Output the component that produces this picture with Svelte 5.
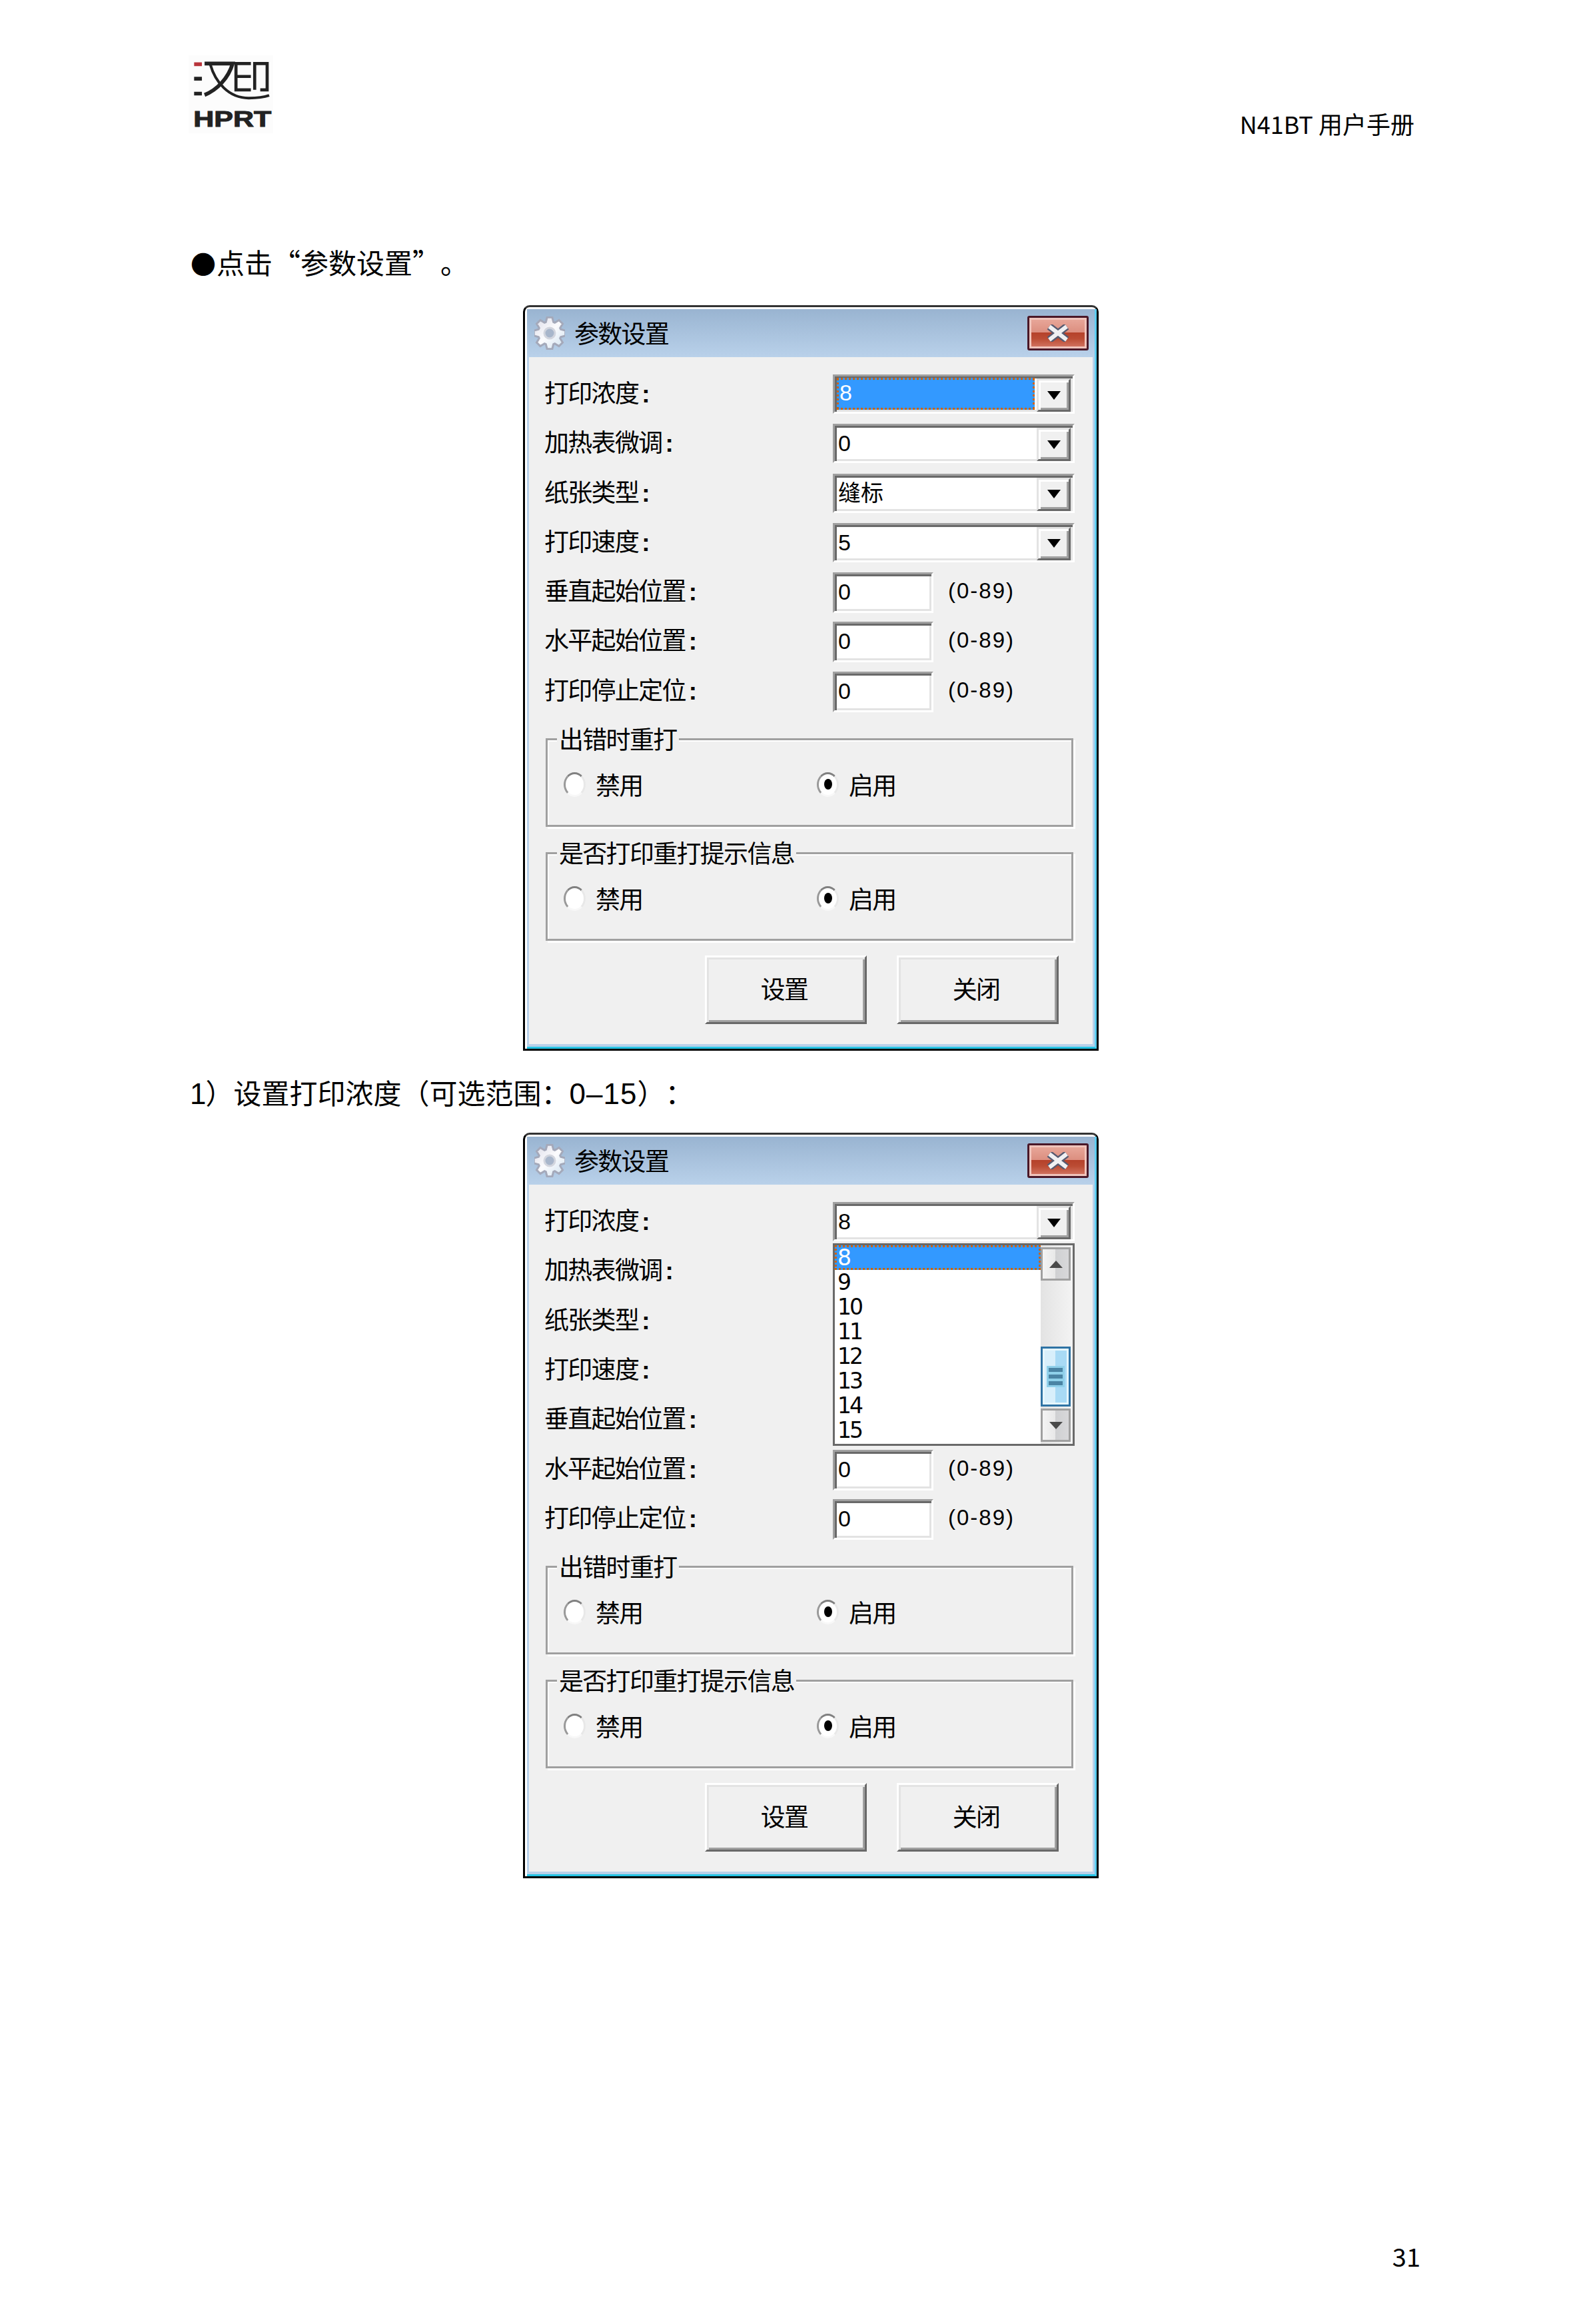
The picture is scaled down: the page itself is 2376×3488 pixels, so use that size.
<script lang="ts">
	// 用户手册第 31 页：参数设置对话框（两张截图，第二张展开了打印浓度下拉列表）
	const rows = [
		{ label: '打印浓度', value: '8', kind: 'combo' },
		{ label: '加热表微调', value: '0', kind: 'combo' },
		{ label: '纸张类型', value: '缝标', kind: 'combo' },
		{ label: '打印速度', value: '5', kind: 'combo' },
		{ label: '垂直起始位置', value: '0', kind: 'input' },
		{ label: '水平起始位置', value: '0', kind: 'input' },
		{ label: '打印停止定位', value: '0', kind: 'input' }
	];
	const groups = ['出错时重打', '是否打印重打提示信息'];
	const densities = ['8', '9', '10', '11', '12', '13', '14', '15'];

	// 齿轮图标的轮廓：8 个齿
	function gearPath(cx: number, cy: number, outer: number, inner: number, teeth = 8) {
		const pts: string[] = [];
		const step = (Math.PI * 2) / teeth;
		for (let i = 0; i < teeth; i++) {
			const a = i * step - Math.PI / 2;
			for (const [da, r] of [
				[-0.3, inner],
				[-0.15, outer],
				[0.15, outer],
				[0.3, inner]
			]) {
				const t = a + da * step * 1.4;
				pts.push(`${(cx + Math.cos(t) * r).toFixed(1)} ${(cy + Math.sin(t) * r).toFixed(1)}`);
			}
		}
		return `M${pts.join('L')}Z`;
	}
	const gear = gearPath(23, 25, 24, 17.5);
</script>

{#snippet dialog(open: boolean)}
	<div class="dialog">
		<div class="frame">
			<div class="titlebar">
				<svg class="gear" viewBox="0 0 46 50" aria-hidden="true">
					<defs>
						<linearGradient id="gearfill" x1="0" y1="0" x2="1" y2="1">
							<stop offset="0" stop-color="#dcdce8" />
							<stop offset="0.5" stop-color="#fbfbfd" />
							<stop offset="1" stop-color="#cfe2f0" />
						</linearGradient>
					</defs>
					<path d={gear} fill="url(#gearfill)" stroke="#a4a9ba" stroke-width="3" />
					<circle cx="23" cy="25" r="8" fill="#a8b6cb" stroke="#d2d5de" stroke-width="3" />
				</svg>
				<span class="title">参数设置</span>
				<div class="close">
					<svg viewBox="0 0 34 26" aria-hidden="true">
						<path d="M4 3 30 23M30 3 4 23" stroke="#565a70" stroke-width="11" fill="none" />
						<path d="M4 3 30 23M30 3 4 23" stroke="#f0f0f2" stroke-width="6" fill="none" />
					</svg>
				</div>
			</div>
			<div class="body">
				<div class="rows">
					{#each rows as row, i}
						<div class="row">
							<span class="label">{row.label}<b class="colon">:</b></span>
							{#if !open || i === 0 || i > 4}
								{#if row.kind === 'combo'}
									<div class="field combo">
										<span class="value" class:selected={i === 0 && !open}>{row.value}</span>
										<div class="drop"><i class="tri"></i></div>
									</div>
								{:else}
									<div class="field input"><span class="value">{row.value}</span></div>
									<span class="hint">(0-89)</span>
								{/if}
							{/if}
						</div>
					{/each}
					{#if open}
						<div class="list">
							<div class="items">
								{#each densities as d, i}
									<div class="item" class:selected={i === 0}>{d}</div>
								{/each}
							</div>
							<div class="scrollbar">
								<div class="sbtn"><i class="up"></i></div>
								<div class="spacer"></div>
								<div class="thumb"><div class="grip"><b></b><b></b><b></b></div></div>
								<div class="sbtn"><i class="down"></i></div>
							</div>
						</div>
					{/if}
				</div>
				{#each groups as name}
					<div class="group">
						<span class="legend">{name}</span>
						<div class="options">
							<div class="option"><i class="radio"></i><span>禁用</span></div>
							<div class="option"><i class="radio on"></i><span>启用</span></div>
						</div>
					</div>
				{/each}
				<div class="actions">
					<div class="btn">设置</div>
					<div class="btn">关闭</div>
				</div>
			</div>
		</div>
	</div>
{/snippet}

<div class="page">
	<header>
		<svg class="logo" viewBox="70 70 380 350" aria-label="HPRT">
			<rect x="70" y="70" width="380" height="350" fill="#fcfcfc" />
			<g fill="none" stroke="#222" stroke-width="17">
				<path d="M95 110H130" stroke="#b8343a" />
				<path d="M95 175H130M95 242H130" />
				<path d="M142 107H268C250 170 200 225 142 248" />
				<path d="M168 112C190 190 250 262 340 262C375 262 410 258 432 250" stroke-width="12" />
				<path d="M350 107H283V225H350M283 165H350" stroke-width="14" />
				<path d="M367 225V107H423V225H392" stroke-width="14" />
			</g>
			<text class="logo-text" x="92" y="390" textLength="350" lengthAdjust="spacingAndGlyphs">HPRT</text>
		</svg>
		<div class="running">N41BT 用户手册</div>
	</header>

	<p class="lead"><span class="bullet">●</span>点击“参数设置”。</p>
	{@render dialog(false)}
	<p class="caption"><span class="latin first">1</span>）设置打印浓度（可选范围：<span class="latin">0–15</span>）：</p>
	{@render dialog(true)}

	<footer>31</footer>
</div>

<style>
	* {
		box-sizing: border-box;
	}

	:global(body) {
		margin: 0;
		background: #fff;
	}

	.page {
		width: 2376px;
		height: 3488px;
		padding: 83px 253px 0 283px;
		display: flex;
		flex-direction: column;
		background: #fff;
		color: #000;
		font-family: 'Noto Sans CJK SC', 'Noto Sans', sans-serif;
		text-spacing-trim: space-all;
	}

	header {
		display: flex;
		justify-content: space-between;
		align-items: flex-start;
		height: 117px;
	}

	.logo {
		width: 127px;
		height: 117px;
	}

	.logo-text {
		font-family: 'Liberation Sans', sans-serif;
		font-weight: 700;
		font-size: 97px;
		fill: #222;
		stroke: #222;
		stroke-width: 3px;
	}

	.running {
		margin-top: 77px;
		font-size: 36px;
		line-height: 50px;
	}

	.lead,
	.caption {
		margin: 0;
		font-size: 42px;
		line-height: 60px;
	}

	.lead {
		margin-top: 163px;
		margin-bottom: 35px;
	}

	.bullet {
		display: inline-block;
		width: 42px;
		margin-left: 1px;
		margin-right: -1px;
		text-align: center;
		font-size: 38px;
		line-height: 40px;
	}

	.caption {
		margin-top: 32px;
		margin-bottom: 28px;
	}

	.latin {
		font-family: 'Liberation Sans', sans-serif;
		font-size: 44px;
		letter-spacing: 1px;
	}

	.first {
		margin-left: 2px;
		margin-right: -2px;
	}

	footer {
		margin-top: auto;
		margin-bottom: 72px;
		align-self: flex-end;
		margin-right: -9px;
		font-size: 38px;
		line-height: 60px;
	}

	/* 对话框 */
	.dialog {
		width: 864px;
		margin-left: 502px;
		padding: 3px 0 0 3px;
		border: 3px solid #000;
		border-top-color: #333;
		border-radius: 10px 10px 0 0;
		background: #fff;
		font-size: 37px;
		letter-spacing: -1.7px;
	}

	.frame {
		border-right: 3px solid #5ccdf0;
		border-bottom: 3px solid #26c4e4;
	}

	.titlebar {
		display: flex;
		align-items: center;
		height: 72px;
		padding: 0 9px 0 11px;
		background: linear-gradient(#99b4d1, #b9d1ea);
	}

	.gear {
		width: 46px;
		height: 50px;
	}

	.title {
		margin-left: 14px;
		margin-top: -3px;
	}

	.close {
		display: flex;
		align-items: center;
		justify-content: center;
		margin-left: auto;
		width: 92px;
		height: 52px;
		border: 3px solid #4a1828;
		box-shadow: inset 0 0 0 3px #f0c4bc;
		border-radius: 3px;
		background: linear-gradient(#e9a99c, #dc8f80 47%, #b5412a 48%, #bb4c34 68%, #d67a68);
	}

	.close svg {
		width: 34px;
		height: 26px;
	}

	.body {
		padding: 26px 29px 30px 25px;
		border: solid #b9d1ea;
		border-width: 0 3px 4px;
		background: #f0f0f0;
	}

	.rows {
		position: relative;
		display: grid;
		grid-auto-rows: 74.3px;
		margin-bottom: 26px;
	}

	.row {
		display: flex;
		align-items: flex-start;
	}

	.label {
		width: 431px;
		padding-right: 2px;
		margin-left: -2px;
		margin-right: 2px;
		line-height: 52px;
	}

	.colon {
		margin-left: 5px;
		font-family: 'Liberation Sans', sans-serif;
	}

	.field {
		display: flex;
		border: 3px solid;
		border-color: #a0a0a0 #fff #fff #a0a0a0;
		box-shadow:
			inset 3px 3px 0 #696969,
			inset -3px -3px 0 #e3e3e3;
		background: #fff;
	}

	.combo {
		width: 363px;
		height: 59px;
	}

	.input {
		width: 151px;
		height: 61px;
	}

	.value {
		flex: 1;
		margin: 3px;
		padding-left: 2px;
		line-height: 47px;
		font-family: 'Liberation Sans', 'Noto Sans CJK SC', sans-serif;
		font-size: 34px;
		letter-spacing: 0;
	}

	.value.selected {
		margin: 2px 3px 3px 3px;
		padding-left: 1px;
		line-height: 38px;
		border: 3px dotted #d06000;
		background: #3399ff;
		color: #fff;
	}

	.drop {
		display: flex;
		align-items: center;
		justify-content: center;
		width: 51px;
		height: 50px;
		margin: 3px 3px 0 0;
		border: 3px solid;
		border-color: #e3e3e3 #696969 #696969 #e3e3e3;
		box-shadow:
			inset 3px 3px 0 #fff,
			inset -3px -3px 0 #a0a0a0;
		background: #f0f0f0;
	}

	.tri {
		border-style: solid;
		border-width: 13px 10px 0;
		border-color: #000 transparent transparent;
	}

	.hint {
		margin-left: 22px;
		line-height: 56px;
		font-size: 33px;
		letter-spacing: 2px;
		font-family: 'Liberation Sans', sans-serif;
	}

	/* 展开的下拉列表 */
	.list {
		position: absolute;
		top: 62px;
		left: 431px;
		display: flex;
		width: 363px;
		height: 304px;
		border: 3px solid #696969;
		background: #fff;
		font-family: 'DejaVu Sans', sans-serif;
		font-size: 33px;
		letter-spacing: -3px;
	}

	.items {
		flex: 1;
	}

	.item {
		height: 37px;
		padding-left: 4px;
		line-height: 37px;
	}

	.item.selected {
		padding-left: 1px;
		line-height: 31px;
		border: 3px dotted #d06000;
		background: #3399ff;
		color: #fff;
	}

	.scrollbar {
		display: flex;
		flex-direction: column;
		width: 48px;
		padding: 3px 3px 3px 0;
		background: linear-gradient(90deg, #e3e3e3, #f3f3f3);
	}

	.sbtn {
		display: flex;
		align-items: center;
		justify-content: center;
		height: 50px;
		border: 3px solid #a0a0a0;
		background: linear-gradient(90deg, #f4f4f4 0, #e8e8e8 48%, #cfd0d2 49%, #d8d8da 100%);
	}

	.sbtn:last-child {
		margin-top: 3px;
	}

	.up,
	.down {
		border-style: solid;
		border-width: 0 10px 11px;
		border-color: transparent transparent #4a4a4a;
	}

	.down {
		border-width: 11px 10px 0;
		border-color: #4a4a4a transparent transparent;
	}

	.spacer {
		flex: 1;
	}

	.thumb {
		display: flex;
		align-items: center;
		justify-content: center;
		height: 90px;
		border: 3px solid #2f73a4;
		box-shadow: inset 0 0 0 3px #e6f6fd;
		background: linear-gradient(90deg, #d8effb 0, #d8effb 48%, #a8daf5 49%, #a8daf5 100%);
	}

	.grip {
		display: flex;
		flex-direction: column;
		gap: 4px;
		padding: 3px;
		background: #8fd0ea;
	}

	.grip b {
		display: block;
		width: 21px;
		height: 6px;
		background: #4a84a4;
	}

	/* 分组框 */
	.group {
		position: relative;
		height: 133px;
		border: 3px solid #a0a0a0;
		box-shadow:
			inset 2px 2px 0 #fff,
			3px 3px 0 #fff;
	}

	.group + .group {
		margin-top: 38px;
	}

	.legend {
		position: absolute;
		top: -30px;
		left: 14px;
		padding: 0 3px;
		background: #f0f0f0;
		line-height: 54px;
	}

	.options {
		display: flex;
		padding: 46px 0 0 24px;
	}

	.option {
		display: flex;
		align-items: center;
		width: 380px;
		height: 40px;
		gap: 15px;
	}

	.radio {
		width: 33px;
		height: 37px;
		flex: none;
		display: flex;
		align-items: center;
		justify-content: center;
		border: 3px solid;
		border-color: #808080 #e8e8e8 #f8f8f8 #999;
		border-radius: 50%;
		background: #fff;
	}

	.radio.on::after {
		content: '';
		width: 12px;
		height: 16px;
		border-radius: 50%;
		background: #000;
	}

	.actions {
		display: flex;
		gap: 45px;
		margin-top: 22px;
		margin-left: 239px;
	}

	.btn {
		display: flex;
		align-items: center;
		justify-content: center;
		width: 243px;
		height: 103px;
		padding: 0 5px 5px 0;
		border: 3px solid;
		border-color: #fff #696969 #696969 #fff;
		box-shadow:
			inset 3px 3px 0 #e3e3e3,
			inset -3px -3px 0 #a0a0a0;
	}
</style>
